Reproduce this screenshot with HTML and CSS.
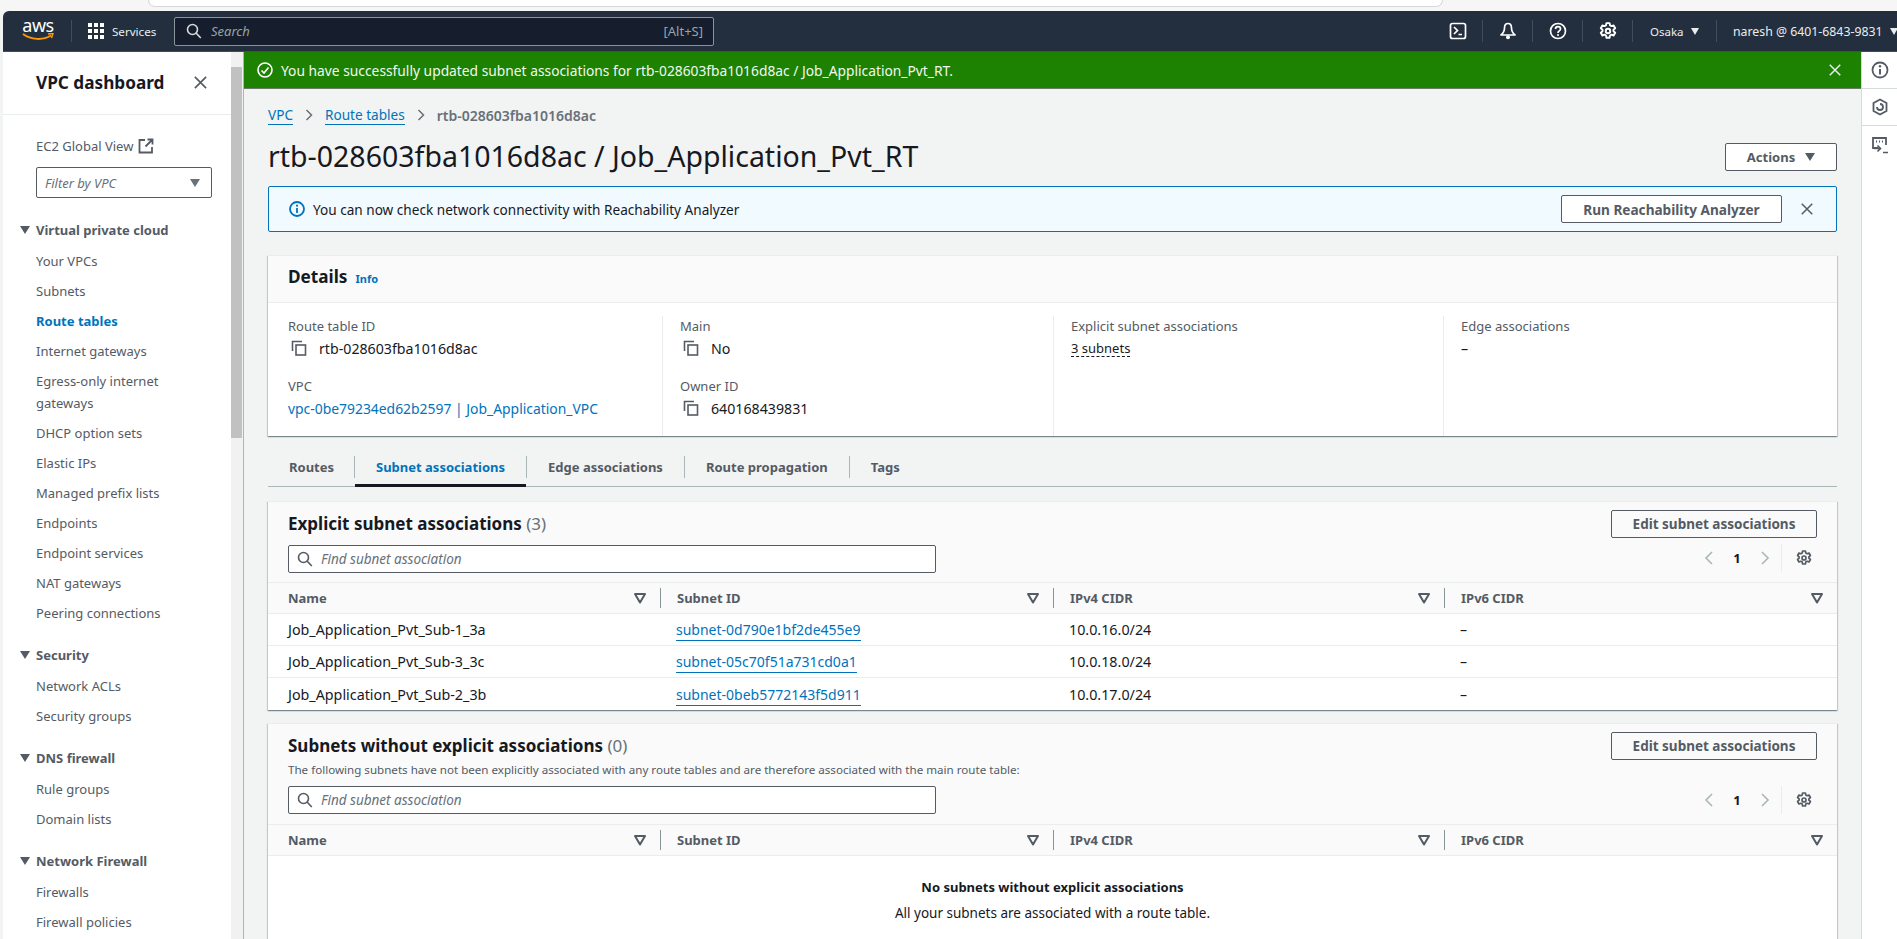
FILE: index.html
```html
<!DOCTYPE html>
<html lang="en">
<head>
    <meta charset="UTF-8">
    <title>Route table details</title>
    <link rel="stylesheet" href="styles.css">
</head>
<body>
    <svg class="defs" width="0" height="0">
        <symbol id="gear" viewBox="0 0 16 16">
            <path d="M6.6 1h2.8l.4 2 1.3.7 1.9-.7 1.4 2.5-1.5 1.3v1.4l1.5 1.3-1.4 2.5-1.9-.7-1.3.7-.4 2H6.600l-.4-2-1.3-.7-1.900.7-1.400-2.500 1.500-1.300V6.800L1.600 5.500 3 3l1.900.7 1.300-.7z" fill="none" stroke="currentColor" stroke-width="1.700" stroke-linejoin="round"/>
            <circle cx="8" cy="8" r="2" fill="none" stroke="currentColor" stroke-width="1.700"/>
        </symbol>
        <symbol id="copy" viewBox="0 0 16 16">
            <path d="M1.500 11V1.500H11" fill="none" stroke="currentColor" stroke-width="1.600"/>
            <rect x="5" y="5" width="9.500" height="10" fill="none" stroke="currentColor" stroke-width="1.600"/>
        </symbol>
        <symbol id="sort" viewBox="0 0 14 14">
            <path d="M2 3h10L7 11.500z" fill="none" stroke="currentColor" stroke-width="2" stroke-linejoin="round"/>
        </symbol>
        <symbol id="find" viewBox="0 0 16 16">
            <circle cx="6.500" cy="6.500" r="5" fill="none" stroke="currentColor" stroke-width="1.600"/>
            <path d="M10 10l4.800 5" fill="none" stroke="currentColor" stroke-width="1.600"/>
        </symbol>
        <symbol id="close" viewBox="0 0 16 16">
            <path d="M2 2l12 12M14 2L2 14" fill="none" stroke="currentColor" stroke-width="1.700"/>
        </symbol>
    </svg>

    <div class="browser-strip"><div class="address-bar"></div></div>

    <header class="topnav">
        <div class="aws-logo">
            <span class="aws-word">aws</span>
            <svg class="aws-smile" width="32" height="8" viewBox="0 0 32 8"><path d="M1 1c8 6 20 6.500 28 1.500" fill="none" stroke="#f90" stroke-width="2"/><path d="M26 1l5-.5-1.500 4.500" fill="none" stroke="#f90" stroke-width="1.500"/></svg>
        </div>
        <div class="nav-sep nav-sep-logo"></div>
        <div class="services">
            <div class="grid-icon"><i></i><i></i><i></i><i></i><i></i><i></i><i></i><i></i><i></i></div>
            <span>Services</span>
        </div>
        <div class="nav-search">
            <svg class="nav-search-icon" width="16" height="16"><use href="#find"/></svg>
            <span class="nav-search-text">Search</span>
            <span class="nav-search-key">[Alt+S]</span>
        </div>
        <div class="nav-right">
            <div class="nav-icon"><svg width="18" height="18" viewBox="0 0 18 18"><rect x="1.500" y="1.500" width="15" height="15" rx="2" fill="none" stroke="#fff" stroke-width="1.700"/><path d="M5 5l3.500 3.500L5 12M9.500 12.500H13" fill="none" stroke="#fff" stroke-width="1.700"/></svg></div>
            <div class="nav-icon"><svg width="18" height="18" viewBox="0 0 18 18"><path d="M9 1.500c-2.500 0-3.500 2-3.500 4.500 0 3-1 5-3.500 7h14c-2.500-2-3.500-4-3.500-7 0-2.500-1-4.500-3.500-4.500z" fill="none" stroke="#fff" stroke-width="1.700" stroke-linejoin="round"/><circle cx="9" cy="15.200" r="2" fill="#fff"/></svg></div>
            <div class="nav-icon"><svg width="18" height="18" viewBox="0 0 18 18"><circle cx="9" cy="9" r="7.500" fill="none" stroke="#fff" stroke-width="1.700"/><path d="M6.500 7c0-1.500 1.100-2.400 2.500-2.400s2.500.9 2.500 2.300c0 2-2.500 2-2.500 4" fill="none" stroke="#fff" stroke-width="1.700"/><circle cx="9" cy="13" r="1" fill="#fff"/></svg></div>
            <div class="nav-icon"><svg width="18" height="18"><use href="#gear"/></svg></div>
            <div class="nav-menu nav-region">Osaka <span class="caret"></span></div>
            <div class="nav-menu nav-user">naresh @ 6401-6843-9831 <span class="caret"></span></div>
        </div>
    </header>

    <div class="shell">
        <aside class="sidebar">
            <div class="side-body">
                <div class="side-head">
                    <h2>VPC dashboard</h2>
                    <svg class="side-close" width="15" height="15"><use href="#close"/></svg>
                </div>
                <div class="global-view">EC2 Global View
                    <svg width="16" height="16" viewBox="0 0 16 16"><path d="M7 2H1.500v12.500H14V9M9.500 1.500H14.500V6.500M14 2L7.500 8.500" fill="none" stroke="#545b64" stroke-width="1.800"/></svg>
                </div>
                <div class="vpc-filter"><span>Filter by VPC</span><span class="caret caret-big"></span></div>

                <div class="side-group">Virtual private cloud</div>
                <a class="side-link">Your VPCs</a>
                <a class="side-link">Subnets</a>
                <a class="side-link side-active">Route tables</a>
                <a class="side-link">Internet gateways</a>
                <a class="side-link side-two">Egress-only internet gateways</a>
                <a class="side-link">DHCP option sets</a>
                <a class="side-link">Elastic IPs</a>
                <a class="side-link">Managed prefix lists</a>
                <a class="side-link">Endpoints</a>
                <a class="side-link">Endpoint services</a>
                <a class="side-link">NAT gateways</a>
                <a class="side-link">Peering connections</a>

                <div class="side-group">Security</div>
                <a class="side-link">Network ACLs</a>
                <a class="side-link">Security groups</a>

                <div class="side-group">DNS firewall</div>
                <a class="side-link">Rule groups</a>
                <a class="side-link">Domain lists</a>

                <div class="side-group">Network Firewall</div>
                <a class="side-link">Firewalls</a>
                <a class="side-link">Firewall policies</a>
            </div>
            <div class="side-scroll"><div class="scroll-thumb"></div></div>
        </aside>

        <div class="main-wrap">
            <div class="flash">
                <svg width="16" height="16" viewBox="0 0 16 16"><circle cx="8" cy="8" r="7" fill="none" stroke="#fff" stroke-width="1.600"/><path d="M4.500 8.500l2.500 2.500 4.500-5.500" fill="none" stroke="#fff" stroke-width="1.600"/></svg>
                <span class="flash-text">You have successfully updated subnet associations for rtb-028603fba1016d8ac / Job_Application_Pvt_RT.</span>
                <svg class="flash-close" width="14" height="14"><use href="#close"/></svg>
            </div>

            <main class="content">
                <nav class="crumbs">
                    <a>VPC</a>
                    <svg width="8" height="12" viewBox="0 0 8 12"><path d="M1.500 1l5 5-5 5" fill="none" stroke="#687078" stroke-width="1.500"/></svg>
                    <a>Route tables</a>
                    <svg width="8" height="12" viewBox="0 0 8 12"><path d="M1.500 1l5 5-5 5" fill="none" stroke="#687078" stroke-width="1.500"/></svg>
                    <span>rtb-028603fba1016d8ac</span>
                </nav>

                <div class="title-row">
                    <h1>rtb-028603fba1016d8ac / Job_Application_Pvt_RT</h1>
                    <button class="btn btn-actions">Actions <span class="caret caret-big"></span></button>
                </div>

                <div class="alert">
                    <svg width="16" height="16" viewBox="0 0 16 16"><circle cx="8" cy="8" r="7" fill="none" stroke="#0073bb" stroke-width="1.800"/><path d="M8 7v5" stroke="#0073bb" stroke-width="1.800"/><circle cx="8" cy="4.700" r="1.100" fill="#0073bb"/></svg>
                    <span class="alert-text">You can now check network connectivity with Reachability Analyzer</span>
                    <button class="btn btn-run">Run Reachability Analyzer</button>
                    <svg class="alert-close" width="14" height="14"><use href="#close"/></svg>
                </div>

                <section class="card details">
                    <div class="details-head"><h2>Details</h2><a class="info-link">Info</a></div>
                    <div class="details-grid">
                        <div class="detail-col">
                            <div class="detail-item">
                                <div class="detail-label">Route table ID</div>
                                <div class="detail-value"><svg class="copy" width="16" height="16"><use href="#copy"/></svg>rtb-028603fba1016d8ac</div>
                            </div>
                            <div class="detail-item">
                                <div class="detail-label">VPC</div>
                                <div class="detail-value"><a class="plain-link">vpc-0be79234ed62b2597 | Job_Application_VPC</a></div>
                            </div>
                        </div>
                        <div class="detail-col">
                            <div class="detail-item">
                                <div class="detail-label">Main</div>
                                <div class="detail-value"><svg class="copy" width="16" height="16"><use href="#copy"/></svg>No</div>
                            </div>
                            <div class="detail-item">
                                <div class="detail-label">Owner ID</div>
                                <div class="detail-value"><svg class="copy" width="16" height="16"><use href="#copy"/></svg>640168439831</div>
                            </div>
                        </div>
                        <div class="detail-col">
                            <div class="detail-item">
                                <div class="detail-label">Explicit subnet associations</div>
                                <div class="detail-value"><span class="dotted">3 subnets</span></div>
                            </div>
                        </div>
                        <div class="detail-col">
                            <div class="detail-item">
                                <div class="detail-label">Edge associations</div>
                                <div class="detail-value">–</div>
                            </div>
                        </div>
                    </div>
                </section>

                <div class="tabs">
                    <div class="tab">Routes</div>
                    <div class="tab tab-active">Subnet associations</div>
                    <div class="tab">Edge associations</div>
                    <div class="tab">Route propagation</div>
                    <div class="tab">Tags</div>
                </div>

                <section class="card assoc">
                    <div class="assoc-head">
                        <div class="assoc-left">
                            <h2>Explicit subnet associations <span class="count">(3)</span></h2>
                            <div class="find"><svg width="16" height="16"><use href="#find"/></svg><span>Find subnet association</span></div>
                        </div>
                        <div class="assoc-right">
                            <button class="btn btn-edit">Edit subnet associations</button>
                            <div class="pager">
                                <svg width="10" height="14" viewBox="0 0 10 14"><path d="M8 1L2 7l6 6" fill="none" stroke="#aab7b8" stroke-width="1.600"/></svg>
                                <span class="page-num">1</span>
                                <svg width="10" height="14" viewBox="0 0 10 14"><path d="M2 1l6 6-6 6" fill="none" stroke="#aab7b8" stroke-width="1.600"/></svg>
                                <div class="pager-sep"></div>
                                <svg class="pager-gear" width="16" height="16"><use href="#gear"/></svg>
                            </div>
                        </div>
                    </div>
                    <div class="grid-row grid-header">
                        <div class="th"><div class="th-in">Name<svg width="14" height="14"><use href="#sort"/></svg></div></div>
                        <div class="th"><div class="th-in">Subnet ID<svg width="14" height="14"><use href="#sort"/></svg></div></div>
                        <div class="th"><div class="th-in">IPv4 CIDR<svg width="14" height="14"><use href="#sort"/></svg></div></div>
                        <div class="th"><div class="th-in">IPv6 CIDR<svg width="14" height="14"><use href="#sort"/></svg></div></div>
                    </div>
                    <div class="grid-row grid-body">
                        <div class="td">Job_Application_Pvt_Sub-1_3a</div>
                        <div class="td"><a class="link">subnet-0d790e1bf2de455e9</a></div>
                        <div class="td">10.0.16.0/24</div>
                        <div class="td">–</div>
                    </div>
                    <div class="grid-row grid-body">
                        <div class="td">Job_Application_Pvt_Sub-3_3c</div>
                        <div class="td"><a class="link">subnet-05c70f51a731cd0a1</a></div>
                        <div class="td">10.0.18.0/24</div>
                        <div class="td">–</div>
                    </div>
                    <div class="grid-row grid-body grid-last">
                        <div class="td">Job_Application_Pvt_Sub-2_3b</div>
                        <div class="td"><a class="link">subnet-0beb5772143f5d911</a></div>
                        <div class="td">10.0.17.0/24</div>
                        <div class="td">–</div>
                    </div>
                </section>

                <section class="card assoc assoc-none">
                    <div class="assoc-head">
                        <div class="assoc-left">
                            <h2>Subnets without explicit associations <span class="count">(0)</span></h2>
                            <p class="assoc-desc">The following subnets have not been explicitly associated with any route tables and are therefore associated with the main route table:</p>
                            <div class="find"><svg width="16" height="16"><use href="#find"/></svg><span>Find subnet association</span></div>
                        </div>
                        <div class="assoc-right">
                            <button class="btn btn-edit">Edit subnet associations</button>
                            <div class="pager">
                                <svg width="10" height="14" viewBox="0 0 10 14"><path d="M8 1L2 7l6 6" fill="none" stroke="#aab7b8" stroke-width="1.600"/></svg>
                                <span class="page-num">1</span>
                                <svg width="10" height="14" viewBox="0 0 10 14"><path d="M2 1l6 6-6 6" fill="none" stroke="#aab7b8" stroke-width="1.600"/></svg>
                                <div class="pager-sep"></div>
                                <svg class="pager-gear" width="16" height="16"><use href="#gear"/></svg>
                            </div>
                        </div>
                    </div>
                    <div class="grid-row grid-header">
                        <div class="th"><div class="th-in">Name<svg width="14" height="14"><use href="#sort"/></svg></div></div>
                        <div class="th"><div class="th-in">Subnet ID<svg width="14" height="14"><use href="#sort"/></svg></div></div>
                        <div class="th"><div class="th-in">IPv4 CIDR<svg width="14" height="14"><use href="#sort"/></svg></div></div>
                        <div class="th"><div class="th-in">IPv6 CIDR<svg width="14" height="14"><use href="#sort"/></svg></div></div>
                    </div>
                    <div class="empty">
                        <strong>No subnets without explicit associations</strong>
                        <span>All your subnets are associated with a route table.</span>
                    </div>
                </section>
            </main>
        </div>

        <aside class="rail">
            <div class="rail-item"><svg width="18" height="18" viewBox="0 0 18 18"><circle cx="9" cy="9" r="7.500" fill="none" stroke="#545b64" stroke-width="1.800"/><path d="M9 8v5.500" stroke="#545b64" stroke-width="2"/><circle cx="9" cy="5.200" r="1.200" fill="#545b64"/></svg></div>
            <div class="rail-item"><svg width="18" height="18" viewBox="0 0 18 18"><path d="M9 1.500l6.500 3.500v8L9 16.500 2.500 13V5z" fill="none" stroke="#545b64" stroke-width="1.800"/><path d="M9 6a3 3 0 1 1-3 3" fill="none" stroke="#545b64" stroke-width="1.800"/></svg></div>
            <div class="rail-last"><svg width="18" height="18" viewBox="0 0 18 18"><path d="M7 12H2V2h13v7" fill="none" stroke="#545b64" stroke-width="1.800"/><path d="M5 5.500h1M8 5.500h1M11 5.500h1" stroke="#545b64" stroke-width="1.800"/><path d="M3 12.500h6M6.500 9.500l3 3-3 3M12 16.500h5" fill="none" stroke="#545b64" stroke-width="1.600"/></svg></div>
        </aside>
    </div>
</body>
</html>
```

FILE: styles.css
```css
* {
    box-sizing: border-box;
}
html, body {
    margin: 0;
    height: 939px;
    overflow: hidden;
}
body {
    font-family: "Noto Sans", sans-serif;
    font-size: 13px;
    color: #16191f;
    background: #f2f3f3;
}
h1, h2, p {
    margin: 0;
}
.defs {
    display: block;
    height: 0;
}
button {
    font-family: inherit;
}

/* browser strip */
.browser-strip {
    height: 11px;
    background: #f6f6f6;
    padding-left: 148px;
}
.address-bar {
    width: 1295px;
    height: 7px;
    background: #fff;
    border: 1px solid #d5d7d9;
    border-top: none;
    border-radius: 0 0 10px 10px;
}

/* top nav */
.topnav {
    height: 41px;
    margin-left: 3px;
    background: #232f3e;
    border-radius: 6px 0 0 0;
    border-bottom: 1px solid #414d5c;
    display: flex;
    align-items: center;
    color: #fff;
}
.aws-logo {
    width: 32px;
    margin-left: 19px;
    display: flex;
    flex-direction: column;
    align-items: center;
}
.aws-word {
    font-size: 18px;
    line-height: 15px;
    letter-spacing: -0.5px;
    margin-top: -3px;
}
.aws-smile {
    margin-top: 0;
}
.nav-sep-logo {
    width: 1px;
    height: 22px;
    background: #414d5c;
    margin-left: 17px;
}
.services {
    display: flex;
    align-items: center;
    margin-left: 16px;
    font-size: 11.6px;
    width: 86px;
}
.services span {
    margin-left: 8px;
    color: #eaeded;
}
.grid-icon {
    display: grid;
    grid-template-columns: repeat(3, 4px);
    gap: 2px;
}
.grid-icon i {
    width: 4px;
    height: 4px;
    background: #fff;
    display: block;
}
.nav-search {
    width: 540px;
    height: 29px;
    background: #161e2d;
    border: 1px solid #879596;
    border-radius: 2px;
    display: flex;
    align-items: center;
    padding: 0 10px 0 11px;
    color: #d5dbdb;
}
.nav-search-text {
    font-style: italic;
    margin-left: 9px;
    color: #95a5a6;
    font-size: 13px;
}
.nav-search-key {
    margin-left: auto;
    color: #95a5a6;
    font-size: 13px;
}
.nav-right {
    margin-left: auto;
    display: flex;
    align-items: center;
    height: 22px;
}
.nav-icon {
    width: 50px;
    height: 22px;
    display: flex;
    justify-content: center;
    align-items: center;
    border-right: 1px solid #414d5c;
    color: #fff;
}
.nav-menu {
    height: 22px;
    display: flex;
    align-items: center;
    font-size: 11.5px;
    color: #eaeded;
    white-space: pre;
}
.nav-region {
    width: 84px;
    padding-left: 17px;
    border-right: 1px solid #414d5c;
}
.nav-user {
    width: 180px;
    padding-left: 16px;
    font-size: 12.3px;
}
.caret {
    display: inline-block;
    width: 0;
    height: 0;
    border-left: 4px solid transparent;
    border-right: 4px solid transparent;
    border-top: 7px solid currentColor;
    margin-left: 4px;
}
.caret-big {
    border-left-width: 5px;
    border-right-width: 5px;
    border-top-width: 8px;
}

/* shell */
.shell {
    display: flex;
    height: 887px;
}

/* sidebar */
.sidebar {
    width: 241px;
    margin-left: 3px;
    display: flex;
    flex-shrink: 0;
    background: #fff;
    border-right: 1px solid #aab7b8;
}
.side-body {
    width: 228px;
    flex-shrink: 0;
    padding-left: 33px;
    color: #545b64;
}
.side-head {
    height: 63px;
    margin: 0 0 0 -33px;
    padding: 0 23px 2px 33px;
    display: flex;
    align-items: center;
    justify-content: space-between;
    border-bottom: 1px solid #eaeded;
}
.side-head h2 {
    font-size: 17.2px;
    font-weight: 700;
    color: #16191f;
}
.side-close {
    color: #545b64;
}
.global-view {
    margin-top: 22px;
    height: 18px;
    line-height: 18px;
    display: flex;
    align-items: center;
    gap: 5px;
}
.vpc-filter {
    width: 176px;
    height: 31px;
    margin-top: 12px;
    background: #fff;
    border: 1px solid #545b64;
    border-radius: 2px;
    padding: 0 11px 0 8px;
    display: flex;
    align-items: center;
    justify-content: space-between;
    font-style: italic;
    color: #687078;
}
.side-group {
    position: relative;
    height: 20px;
    line-height: 20px;
    margin-top: 22px;
    font-weight: 700;
    color: #545b64;
    font-size: 13px;
}
.side-group::before {
    content: "";
    position: absolute;
    left: -16px;
    top: 6px;
    border-left: 5px solid transparent;
    border-right: 5px solid transparent;
    border-top: 8px solid #545b64;
}
.side-link {
    display: block;
    padding-top: 10px;
    height: 30px;
    line-height: 20px;
    color: #545b64;
    width: 170px;
}
.side-group + .side-link {
    margin-top: 1px;
}
.side-two {
    height: 52px;
    line-height: 22px;
    padding-top: 9px;
}
.side-active {
    color: #0073bb;
    font-weight: 700;
}
.side-scroll {
    width: 12px;
    background: #f1f1f1;
    padding-top: 15px;
}
.scroll-thumb {
    width: 11px;
    height: 371px;
    background: #c1c1c1;
}

/* main */
.main-wrap {
    width: 1617px;
    flex-shrink: 0;
    overflow: hidden;
}
.flash {
    height: 37px;
    background: #1d8102;
    border-bottom: 1px solid #6c7a6a;
    color: #fff;
    display: flex;
    align-items: center;
    padding: 0 19px 0 13px;
}
.flash-text {
    margin-left: 8px;
    color: #f2f8f0;
    font-size: 13.8px;
}
.flash-close {
    margin-left: auto;
    color: #eaeded;
}
.content {
    padding: 0 24px;
}
.crumbs {
    height: 20px;
    margin-top: 16px;
    display: flex;
    align-items: center;
    color: #687078;
    font-size: 13.6px;
}
.crumbs a {
    color: #0073bb;
    line-height: 18px;
    border-bottom: 1px solid #0073bb;
}
.crumbs svg {
    margin: 0 12px;
}
.crumbs span {
    font-size: 14px;
    font-weight: 600;
}
.title-row {
    display: flex;
    justify-content: space-between;
    align-items: flex-start;
    margin-top: 5px;
    height: 56px;
}
.title-row h1 {
    font-size: 28.5px;
    font-weight: 400;
    line-height: 40px;
    margin-top: 6px;
    white-space: nowrap;
}
.btn {
    background: #fff;
    border: 1px solid #545b64;
    border-radius: 2px;
    color: #545b64;
    font-weight: 700;
    font-size: 13.6px;
    display: flex;
    align-items: center;
    justify-content: center;
    height: 28px;
    padding: 0;
}
.btn-actions {
    width: 112px;
    margin-top: 13px;
    gap: 6px;
    font-size: 13px;
}
.btn-actions .caret {
    margin-left: 4px;
}
.alert {
    height: 46px;
    background: #f1faff;
    border: 1px solid #0073bb;
    border-radius: 2px;
    display: flex;
    align-items: center;
    padding: 0 22px 0 20px;
}
.alert-text {
    margin-left: 8px;
    font-size: 13.6px;
}
.btn-run {
    width: 221px;
    margin-left: auto;
}
.alert-close {
    margin-left: 18px;
    color: #545b64;
}

/* cards */
.card {
    background: #fff;
    box-shadow: 0 1px 1px 0 rgba(0, 28, 36, 0.3), 1px 1px 1px 0 rgba(0, 28, 36, 0.15), -1px 1px 1px 0 rgba(0, 28, 36, 0.15);
    border-top: 1px solid #eaeded;
}
.details {
    margin-top: 23px;
    height: 181px;
}
.details-head {
    height: 47px;
    background: #fafafa;
    border-bottom: 1px solid #eaeded;
    display: flex;
    align-items: baseline;
    padding: 9px 20px 0;
}
.details-head h2 {
    font-size: 17.2px;
    font-weight: 700;
}
.info-link {
    font-size: 11px;
    font-weight: 700;
    color: #0073bb;
    margin-left: 8px;
}
.details-grid {
    display: grid;
    grid-template-columns: 395px 391px 390px 1fr;
    margin-top: 13px;
    height: 104px;
}
.detail-col {
    padding-left: 17px;
    border-right: 1px solid #eaeded;
}
.detail-col:first-child {
    padding-left: 20px;
}
.detail-col:last-child {
    border-right: none;
}
.detail-item {
    height: 60px;
}
.detail-label {
    height: 20px;
    line-height: 20px;
    color: #545b64;
}
.detail-value {
    display: flex;
    align-items: center;
    height: 24px;
    white-space: nowrap;
    font-size: 14.2px;
}
.copy {
    margin: 0 12px 0 3px;
    color: #545b64;
}
.plain-link {
    color: #0073bb;
    font-size: 13.9px;
}
.dotted {
    border-bottom: 1px dashed #16191f;
    line-height: 16px;
    font-size: 13px;
}
.tabs {
    margin-top: 20px;
    height: 31px;
    display: flex;
    border-bottom: 1px solid #aab7b8;
}
.tab {
    height: 22px;
    line-height: 22px;
    padding: 0 21px;
    font-weight: 700;
    color: #545b64;
    border-right: 1px solid #aab7b8;
    white-space: nowrap;
}
.tab:last-child {
    border-right: none;
}
.tab-active {
    color: #0073bb;
    height: 31px;
    border-bottom: 3px solid #16191f;
    border-right: none;
}
.tab-active + .tab {
    border-left: 1px solid #aab7b8;
}
.tab:first-child {
    width: 87px;
    padding-right: 0;
}
.assoc {
    margin-top: 14px;
    height: 209px;
    background: #fff;
}
.assoc-none {
    margin-top: 13px;
    height: 300px;
}
.assoc-head {
    background: #fafafa;
    display: flex;
    justify-content: space-between;
    padding: 8px 20px 0;
    height: 81px;
    border-bottom: 1px solid #eaeded;
}
.assoc-none .assoc-head {
    height: 101px;
}
.assoc-head h2 {
    font-size: 17px;
    font-weight: 700;
    line-height: 28px;
}
.count {
    font-weight: 400;
    color: #687078;
}
.assoc-desc {
    font-size: 11.6px;
    line-height: 16px;
    color: #545b64;
    margin-top: 2px;
}
.find {
    width: 648px;
    height: 28px;
    margin-top: 7px;
    background: #fff;
    border: 1px solid #545b64;
    border-radius: 2px;
    display: flex;
    align-items: center;
    padding-left: 8px;
    color: #545b64;
}
.assoc-none .find {
    margin-top: 8px;
}
.find span {
    margin-left: 8px;
    font-style: italic;
    color: #687078;
    font-size: 13.5px;
}
.assoc-right {
    display: flex;
    flex-direction: column;
    align-items: flex-end;
}
.btn-edit {
    width: 206px;
    background: transparent;
    font-size: 13.5px;
}
.pager {
    display: flex;
    align-items: center;
    margin-top: 6px;
    height: 28px;
    padding-right: 5px;
    color: #545b64;
}
.assoc-none .pager {
    margin-top: 26px;
}
.page-num {
    width: 46px;
    text-align: center;
    font-weight: 700;
    font-size: 13px;
    color: #16191f;
}
.pager-sep {
    width: 1px;
    height: 28px;
    background: #eaeded;
    margin: 0 14px 0 11px;
}
.grid-row {
    display: grid;
    grid-template-columns: 392px 393px 391px 1fr;
}
.grid-header {
    height: 31px;
    background: #fafafa;
    border-bottom: 1px solid #eaeded;
    align-items: center;
    font-weight: 700;
    color: #545b64;
}
.th-in {
    height: 20px;
    border-left: 1px solid #879596;
    padding: 0 13px 0 16px;
    display: flex;
    align-items: center;
    justify-content: space-between;
}
.th:first-child .th-in {
    border-left: none;
    padding-left: 20px;
}
.grid-body {
    height: 32px;
    border-bottom: 1px solid #eaeded;
    align-items: center;
}
.grid-last {
    height: 33px;
    border-bottom: none;
}
.td {
    padding-left: 16px;
    white-space: nowrap;
    font-size: 14px;
}
.td:first-child {
    padding-left: 20px;
    font-size: 14.3px;
}
.td:nth-child(3) {
    font-size: 14.3px;
}
.link {
    color: #0073bb;
    border-bottom: 1px solid #0073bb;
    padding-bottom: 1px;
}
.empty {
    display: flex;
    flex-direction: column;
    align-items: center;
    padding-top: 21px;
    gap: 6px;
}
.empty span, .empty strong {
    line-height: 20px;
}
.empty span {
    font-size: 13.5px;
}

/* right rail */
.rail {
    flex: 1;
    background: #fff;
    border-left: 1px solid #d5dbdb;
}
.rail-item {
    height: 37px;
    display: flex;
    align-items: center;
    justify-content: center;
    border-bottom: 1px solid #d5dbdb;
}
.rail-last {
    height: 37px;
    display: flex;
    align-items: center;
    justify-content: center;
}
```
